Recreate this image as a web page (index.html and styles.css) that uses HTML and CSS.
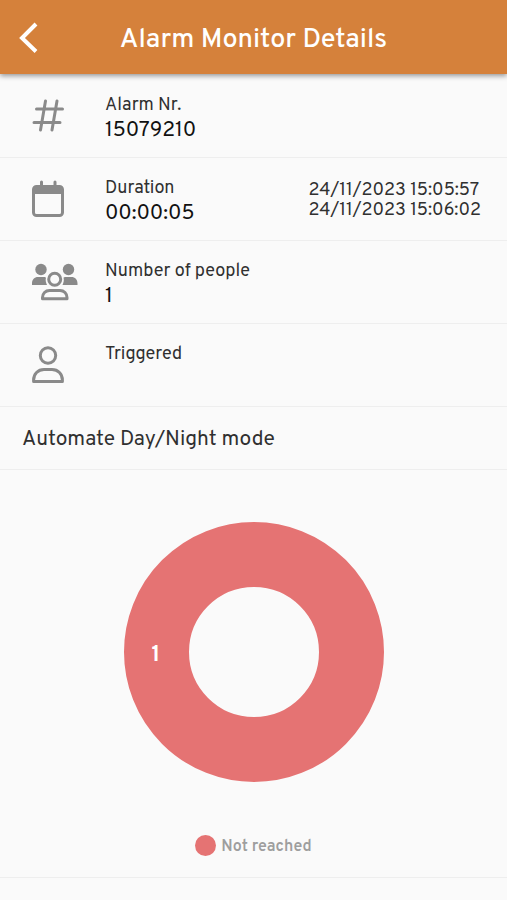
FILE: index.html
```
<!DOCTYPE html>
<html lang="en">
<head>
    <meta charset="UTF-8">
    <meta name="viewport" content="width=device-width, initial-scale=1.0">
    <title>Alarm Monitor Details</title>
    <link rel="stylesheet" href="styles.css">
</head>
<body>
    <header class="topbar">
        <button class="back" type="button" aria-label="Back">
            <svg width="20" height="32" viewBox="0 0 20 32" fill="none" stroke="currentColor" stroke-width="4">
                <path d="M17 3 3 17l14 13.5"/>
            </svg>
        </button>
        <h1>Alarm Monitor Details</h1>
    </header>

    <main>
        <ul class="details">
            <li class="row">
                <svg class="icon" viewBox="0 0 48 40" fill="none" stroke="currentColor" stroke-width="3" stroke-linecap="round">
                    <path d="M13.5 5 8.500 34M25 5 20 34M4.500 13H30.500M2 26.500H28"/>
                </svg>
                <div class="info">
                    <span class="label">Alarm Nr.</span>
                    <span class="value">15079210</span>
                </div>
            </li>
            <li class="row">
                <svg class="icon" viewBox="0 0 48 40" fill="none" stroke="currentColor" stroke-width="3">
                    <path d="M9.500 3v6M23 3v6" stroke-linecap="round"/>
                    <rect x="1.500" y="7.500" width="29" height="29" rx="3"/>
                    <path d="M2 7h28v8H2z" fill="currentColor" stroke="none"/>
                </svg>
                <div class="info">
                    <span class="label">Duration</span>
                    <span class="value">00:00:05</span>
                </div>
                <div class="dates">
                    <time datetime="2023-11-24T15:05:57">24/11/2023 15:05:57</time>
                    <time datetime="2023-11-24T15:06:02">24/11/2023 15:06:02</time>
                </div>
            </li>
            <li class="row">
                <svg class="icon" viewBox="0 0 48 40" fill="none" stroke="currentColor" stroke-width="3" stroke-linejoin="round">
                    <g fill="currentColor" stroke="none">
                        <circle cx="9" cy="7.500" r="5.700"/>
                        <circle cx="36.500" cy="7.500" r="5.700"/>
                        <path d="M0 23v-1.500c0-4 2.500-6.500 6-6.500h6c1 0 1.500.3 2 .6-.8 3 0 5.400 1 7.400zM45.500 23v-1.500c0-4-2.500-6.500-6-6.500h-6c-1 0-1.500.3-2 .6.800 3 0 5.400-1 7.400z"/>
                    </g>
                    <circle cx="22.700" cy="17.300" r="6"/>
                    <path d="M10.500 36.800v-1.300c0-4 3-7 7-7h10.500c4 0 7 3 7 7v1.300z"/>
                </svg>
                <div class="info">
                    <span class="label">Number of people</span>
                    <span class="value">1</span>
                </div>
            </li>
            <li class="row">
                <svg class="icon" viewBox="0 0 48 40" fill="none" stroke="currentColor" stroke-width="3" stroke-linejoin="round">
                    <circle cx="16" cy="10.500" r="7.700"/>
                    <path d="M1.600 36.500v-1.500c0-6 4.400-10.500 10.400-10.500h8c6 0 10.400 4.500 10.400 10.500v1.500z"/>
                </svg>
                <div class="info">
                    <span class="label">Triggered</span>
                </div>
            </li>
        </ul>

        <h2 class="mode">Automate Day/Night mode</h2>

        <section class="chart">
            <svg class="donut" viewBox="0 0 260 260" role="img" aria-label="Not reached: 1">
                <circle cx="130" cy="130" r="97.5"/>
                <text x="32" y="139">1</text>
            </svg>
            <div class="legend">
                <span class="dot"></span>
                <span class="name">Not reached</span>
            </div>
        </section>
    </main>
</body>
</html>
```
FILE: styles.css
```
body
{
    margin: 0;
    background-color: #fafafa;
    color: #303030;
    font-family: Overpass, Inter, sans-serif;
}
.topbar
{
    display: grid;
    grid-template-columns: 58px 1fr 58px;
    align-items: center;
    height: 74px;
    background-color: #d5813b;
    color: white;
    box-shadow: 0 2px 5px rgba(0, 0, 0, 0.4);
}
.topbar h1
{
    margin: 0;
    padding-top: 6px;
    font-size: 27px;
    font-weight: 500;
    line-height: 32px;
    text-align: center;
}
.back
{
    display: flex;
    justify-content: center;
    padding: 0;
    border: none;
    background: none;
    color: inherit;
    cursor: pointer;
}
.details
{
    margin: 0;
    padding: 1px 0 0;
    list-style: none;
}
.row
{
    display: flex;
    align-items: center;
    box-sizing: border-box;
    min-height: 83px;
    padding: 14px 26px 14px 32px;
    border-bottom: 1px solid #eeeeee;
}
.icon
{
    flex: none;
    width: 48px;
    height: 40px;
    color: #8a8a8a;
}
.info
{
    display: flex;
    flex-direction: column;
    flex: 1;
    min-height: 50px;
    margin-left: 25px;
    padding-top: 4px;
    line-height: 25px;
}
.label
{
    font-size: 18px;
}
.value
{
    color: #111111;
    font-size: 21px;
}
.dates
{
    display: flex;
    flex-direction: column;
    padding-top: 4px;
    font-size: 18px;
    line-height: 20px;
}
.mode
{
    margin: 0;
    padding: 21px 22px 17px;
    border-bottom: 1px solid #eeeeee;
    font-size: 21px;
    font-weight: 400;
    line-height: 24px;
}
.chart
{
    display: flex;
    flex-direction: column;
    align-items: center;
    gap: 52px;
    padding: 52px 16px 21px;
    border-bottom: 1px solid #eeeeee;
}
.donut
{
    width: 260px;
    height: 260px;
}
.donut circle
{
    fill: none;
    stroke: #e57373;
    stroke-width: 65px;
}
.donut text
{
    fill: white;
    font-size: 22px;
    font-weight: 700;
    text-anchor: middle;
}
.legend
{
    display: flex;
    align-items: center;
    gap: 5px;
    color: #9e9e9e;
    font-size: 16px;
    font-weight: 600;
    line-height: 22px;
}
.legend .name
{
    padding-top: 4px;
    line-height: 18px;
}
.dot
{
    width: 21px;
    height: 21px;
    border-radius: 50%;
    background-color: #e57373;
}
```
